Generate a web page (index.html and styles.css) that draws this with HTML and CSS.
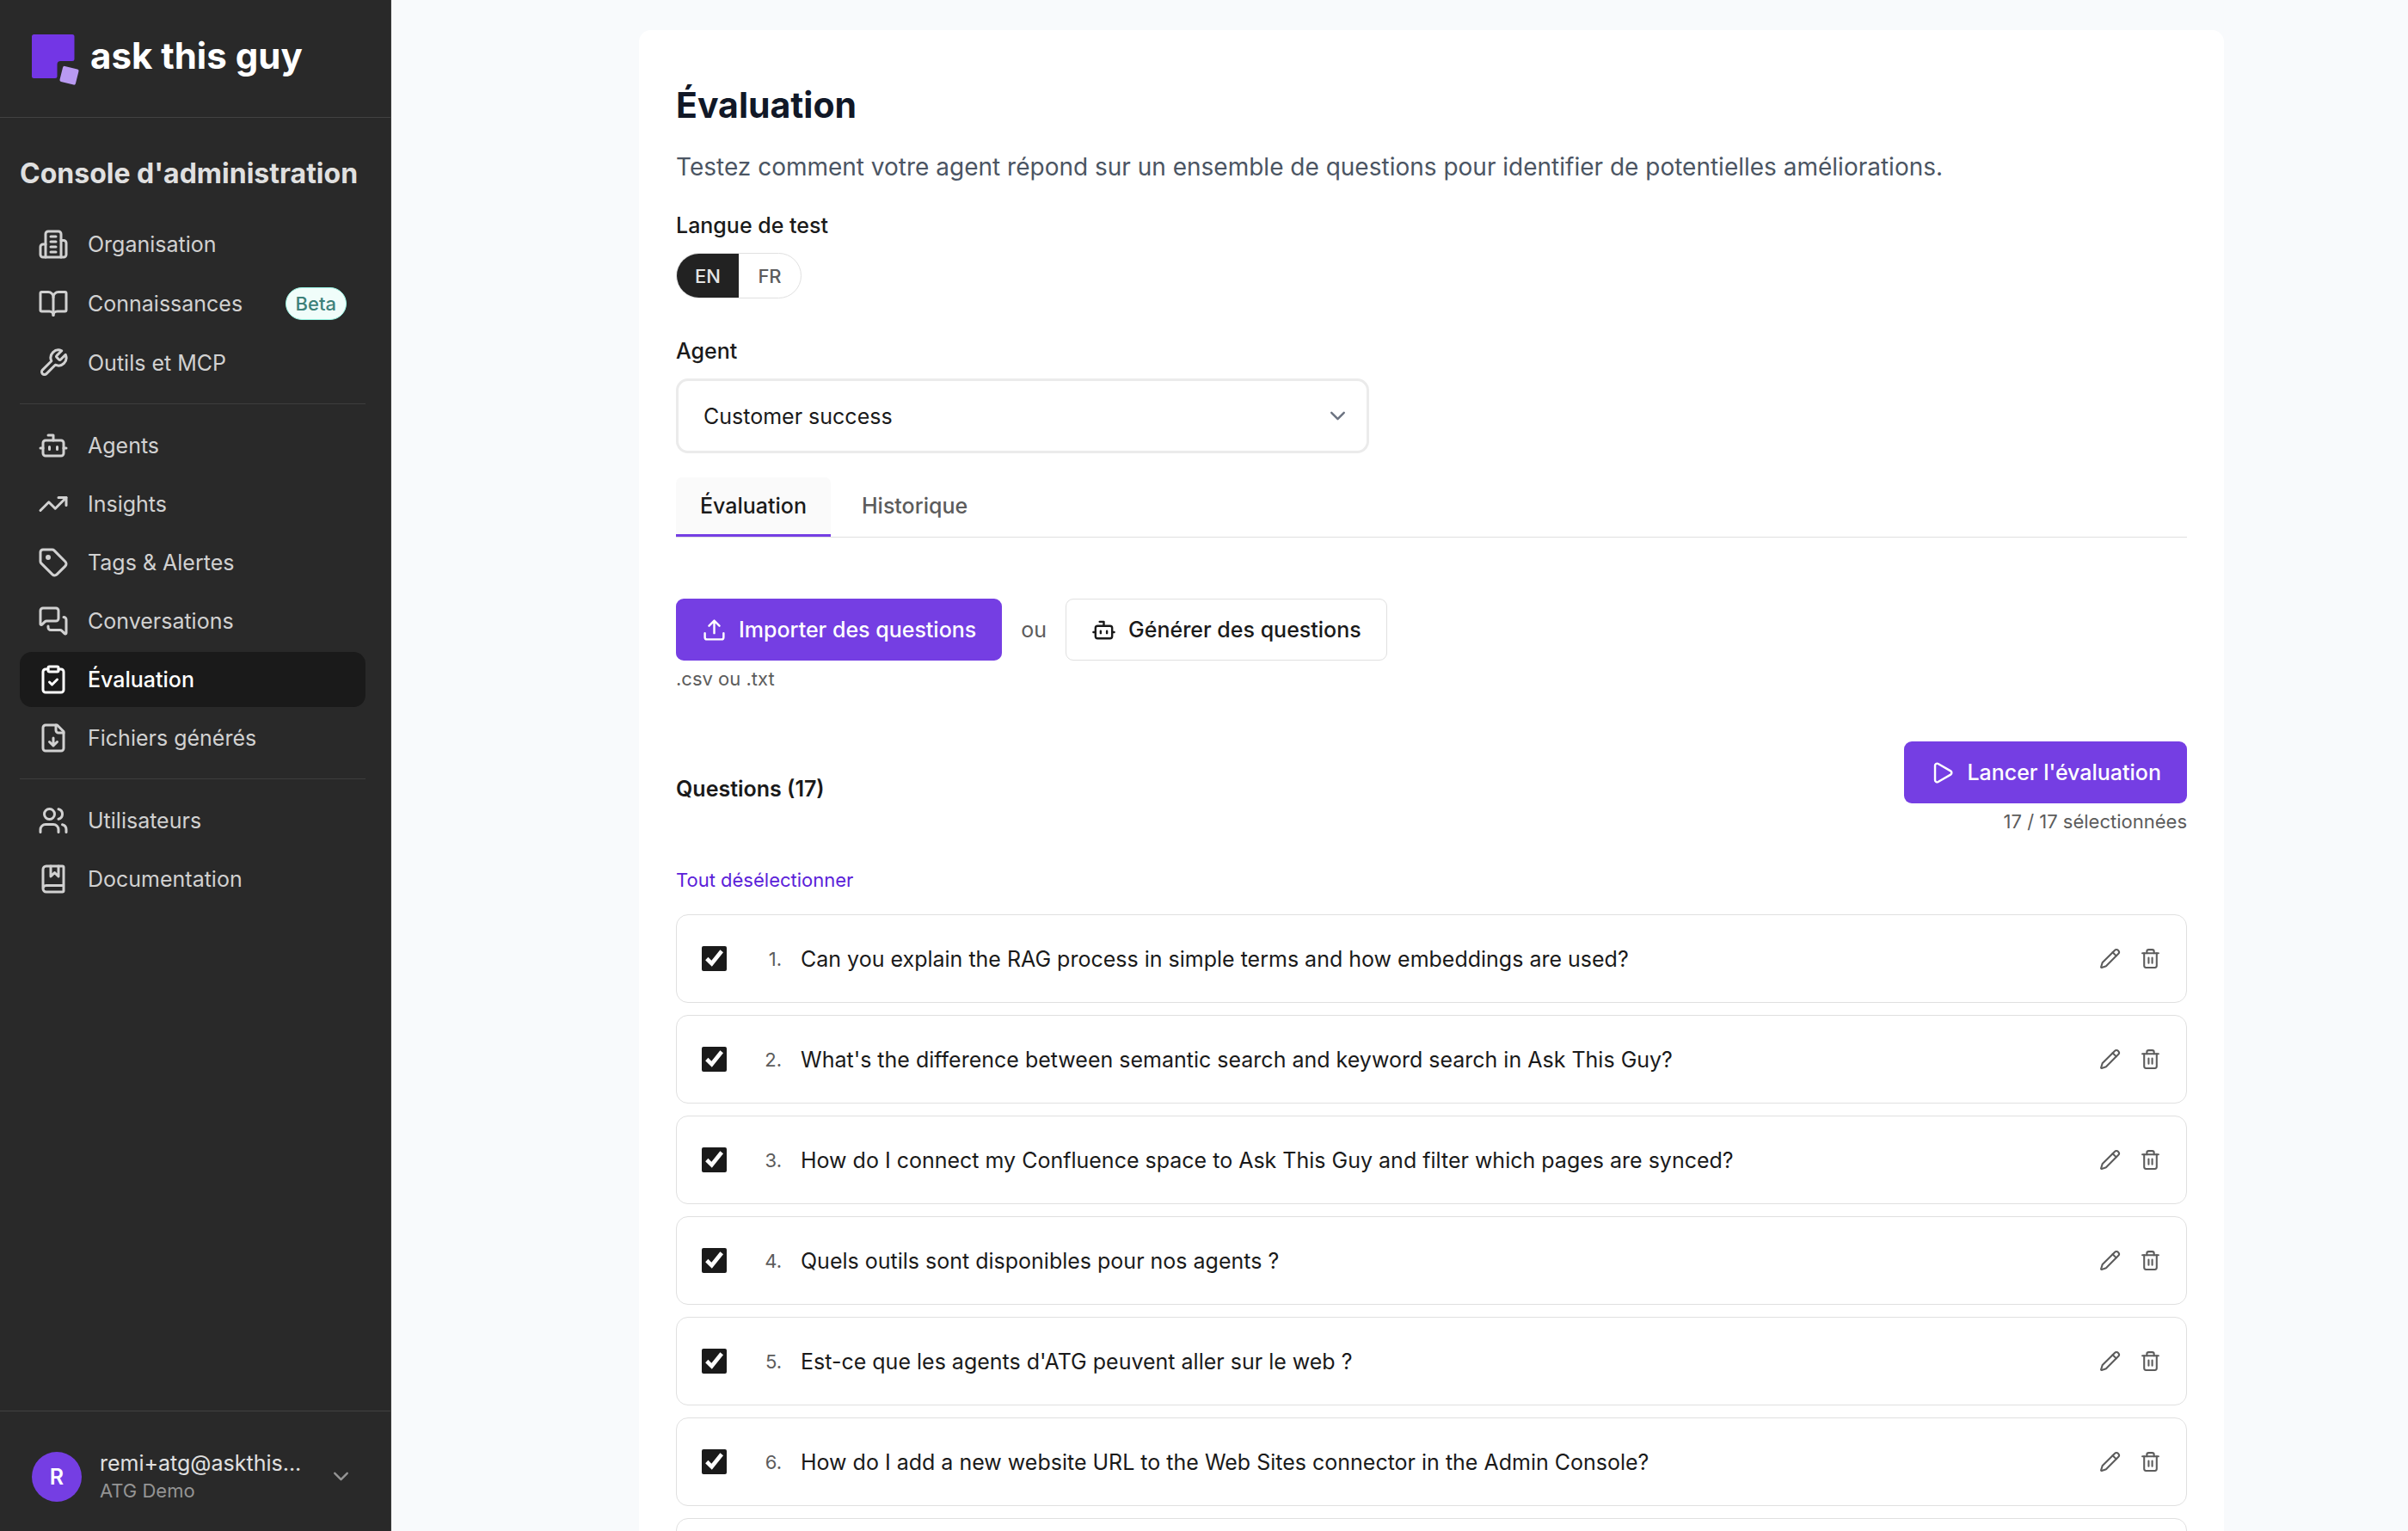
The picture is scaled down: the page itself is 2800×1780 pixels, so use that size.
FILE: index.html
```html
<!DOCTYPE html>
<html lang="fr">
    <head>
        <meta charset="UTF-8" />
        <meta name="viewport" content="width=device-width, initial-scale=1.0" />
        <title>Évaluation - ask this guy</title>
        <link rel="stylesheet" href="styles.css">
    </head>
    <body>
        <!-- Shared icons -->
        <svg class="sprite" aria-hidden="true">
            <symbol id="bot" viewBox="0 0 24 24">
                <path d="M12 8V4H8" />
                <rect width="16" height="12" x="4" y="8" rx="2" />
                <path d="M2 14h2M20 14h2M15 13v2M9 13v2" />
            </symbol>
            <symbol id="chevron" viewBox="0 0 24 24">
                <path d="m6 9 6 6 6-6" />
            </symbol>
            <symbol id="pencil" viewBox="0 0 24 24">
                <path d="M21.174 6.812a1 1 0 0 0-3.986-3.987L3.842 16.174a2 2 0 0 0-.5.83l-1.321 4.352a.5.5 0 0 0 .623.622l4.353-1.32a2 2 0 0 0 .83-.497z" />
                <path d="m15 5 4 4" />
            </symbol>
            <symbol id="trash" viewBox="0 0 24 24">
                <path d="M3 6h18" />
                <path d="M19 6v14c0 1-1 2-2 2H7c-1 0-2-1-2-2V6" />
                <path d="M8 6V4c0-1 1-2 2-2h4c1 0 2 1 2 2v2" />
                <path d="M10 11v6M14 11v6" />
            </symbol>
        </svg>

        <aside class="sidebar">
            <a class="brand" href="#">
                <svg class="brand-logo" viewBox="0 0 56 60">
                    <path fill="#7336e5" d="M2.5 0H47a2.5 2.5 0 0 1 2.5 2.5V28.500a2.5 2.5 0 0 1-2.5 2.5H33.500a4 4 0 0 0-4 4V48.500a2.5 2.5 0 0 1-2.5 2.5H2.5A2.5 2.5 0 0 1 0 48.500V2.5A2.5 2.5 0 0 1 2.5 0Z" />
                    <rect x="34" y="38.5" width="19" height="18.5" rx="2" fill="#b99af2" transform="rotate(14 43.5 47.7)" />
                </svg>
                <span>ask this guy</span>
            </a>

            <nav class="nav">
                <h2>Console d'administration</h2>
                <ul>
                    <li>
                        <a href="#">
                            <svg class="icon" viewBox="0 0 24 24">
                                <path d="M6 22V4a2 2 0 0 1 2-2h8a2 2 0 0 1 2 2v18Z" />
                                <path d="M6 12H4a2 2 0 0 0-2 2v6a2 2 0 0 0 2 2h2M18 9h2a2 2 0 0 1 2 2v9a2 2 0 0 1-2 2h-2" />
                                <path d="M10 6h4M10 10h4M10 14h4M10 18h4" />
                            </svg>
                            Organisation
                        </a>
                    </li>
                    <li>
                        <a href="#">
                            <svg class="icon" viewBox="0 0 24 24">
                                <path d="M12 7v14" />
                                <path d="M3 18a1 1 0 0 1-1-1V4a1 1 0 0 1 1-1h5a4 4 0 0 1 4 4 4 4 0 0 1 4-4h5a1 1 0 0 1 1 1v13a1 1 0 0 1-1 1h-6a3 3 0 0 0-3 3 3 3 0 0 0-3-3z" />
                            </svg>
                            Connaissances
                            <span class="badge">Beta</span>
                        </a>
                    </li>
                    <li>
                        <a href="#">
                            <svg class="icon" viewBox="0 0 24 24">
                                <path d="M14.7 6.3a1 1 0 0 0 0 1.4l1.6 1.6a1 1 0 0 0 1.4 0l3.77-3.77a6 6 0 0 1-7.94 7.94l-6.91 6.91a2.12 2.12 0 0 1-3-3l6.91-6.91a6 6 0 0 1 7.94-7.94l-3.76 3.76z" />
                            </svg>
                            Outils et MCP
                        </a>
                    </li>
                </ul>
                <ul>
                    <li>
                        <a href="#">
                            <svg class="icon"><use href="#bot" /></svg>
                            Agents
                        </a>
                    </li>
                    <li>
                        <a href="#">
                            <svg class="icon" viewBox="0 0 24 24">
                                <path d="M16 7h6v6" />
                                <path d="m22 7-8.5 8.5-5-5L2 17" />
                            </svg>
                            Insights
                        </a>
                    </li>
                    <li>
                        <a href="#">
                            <svg class="icon" viewBox="0 0 24 24">
                                <path d="M12.586 2.586A2 2 0 0 0 11.172 2H4a2 2 0 0 0-2 2v7.172a2 2 0 0 0 .586 1.414l8.704 8.704a2.426 2.426 0 0 0 3.42 0l6.58-6.58a2.426 2.426 0 0 0 0-3.42z" />
                                <circle cx="8" cy="8" r="1" />
                            </svg>
                            Tags &amp; Alertes
                        </a>
                    </li>
                    <li>
                        <a href="#">
                            <svg class="icon" viewBox="0 0 24 24">
                                <path d="M16 10a2 2 0 0 1-2 2H6.828a2 2 0 0 0-1.414.586l-2.202 2.202A.71.71 0 0 1 2 14.286V4a2 2 0 0 1 2-2h10a2 2 0 0 1 2 2z" />
                                <path d="M20 9a2 2 0 0 1 2 2v10.286a.71.71 0 0 1-1.212.502l-2.202-2.202A2 2 0 0 0 17.172 19H10a2 2 0 0 1-2-2v-1" />
                            </svg>
                            Conversations
                        </a>
                    </li>
                    <li>
                        <a class="active" href="#" aria-current="page">
                            <svg class="icon" viewBox="0 0 24 24">
                                <rect width="8" height="4" x="8" y="2" rx="1" />
                                <path d="M16 4h2a2 2 0 0 1 2 2v14a2 2 0 0 1-2 2H6a2 2 0 0 1-2-2V6a2 2 0 0 1 2-2h2" />
                                <path d="m9 14 2 2 4-4" />
                            </svg>
                            Évaluation
                        </a>
                    </li>
                    <li>
                        <a href="#">
                            <svg class="icon" viewBox="0 0 24 24">
                                <path d="M15 2H6a2 2 0 0 0-2 2v16a2 2 0 0 0 2 2h12a2 2 0 0 0 2-2V7Z" />
                                <path d="M14 2v4a2 2 0 0 0 2 2h4" />
                                <path d="M12 18v-6M9 15l3 3 3-3" />
                            </svg>
                            Fichiers générés
                        </a>
                    </li>
                </ul>
                <ul>
                    <li>
                        <a href="#">
                            <svg class="icon" viewBox="0 0 24 24">
                                <path d="M16 21v-2a4 4 0 0 0-4-4H6a4 4 0 0 0-4 4v2" />
                                <circle cx="9" cy="7" r="4" />
                                <path d="M22 21v-2a4 4 0 0 0-3-3.87M16 3.13a4 4 0 0 1 0 7.75" />
                            </svg>
                            Utilisateurs
                        </a>
                    </li>
                    <li>
                        <a href="#">
                            <svg class="icon" viewBox="0 0 24 24">
                                <path d="M10 2v8l3-3 3 3V2" />
                                <path d="M4 19.5v-15A2.5 2.5 0 0 1 6.5 2H19a1 1 0 0 1 1 1v18a1 1 0 0 1-1 1H6.5a1 1 0 0 1 0-5H20" />
                            </svg>
                            Documentation
                        </a>
                    </li>
                </ul>
            </nav>

            <button class="account" type="button">
                <span class="avatar">R</span>
                <span class="account-text">
                    <span class="account-email">remi+atg@askthis...</span>
                    <span class="account-org">ATG Demo</span>
                </span>
                <svg class="icon chevron"><use href="#chevron" /></svg>
            </button>
        </aside>

        <main class="main">
            <div class="card">
                <h1>Évaluation</h1>
                <p class="subtitle">Testez comment votre agent répond sur un ensemble de questions pour identifier de potentielles améliorations.</p>

                <div class="label" id="lang-label">Langue de test</div>
                <div class="lang-switch" role="group" aria-labelledby="lang-label">
                    <button class="selected" type="button" aria-pressed="true">EN</button>
                    <button type="button" aria-pressed="false">FR</button>
                </div>

                <label class="label" for="agent">Agent</label>
                <div class="select-wrap">
                    <select id="agent">
                        <option>Customer success</option>
                    </select>
                    <svg class="icon select-arrow"><use href="#chevron" /></svg>
                </div>

                <div class="tabs" role="tablist">
                    <button class="tab selected" type="button" role="tab" aria-selected="true">Évaluation</button>
                    <button class="tab" type="button" role="tab" aria-selected="false">Historique</button>
                </div>

                <div class="import-row">
                    <button class="btn btn-primary" type="button">
                        <svg class="icon" viewBox="0 0 24 24">
                            <path d="M12 3v12M17 8l-5-5-5 5" />
                            <path d="M21 15v4a2 2 0 0 1-2 2H5a2 2 0 0 1-2-2v-4" />
                        </svg>
                        Importer des questions
                    </button>
                    <span>ou</span>
                    <button class="btn btn-outline" type="button">
                        <svg class="icon"><use href="#bot" /></svg>
                        Générer des questions
                    </button>
                </div>
                <p class="hint">.csv ou .txt</p>

                <div class="questions-header">
                    <h3>Questions (17)</h3>
                    <div class="run">
                        <button class="btn btn-primary" type="button">
                            <svg class="icon" viewBox="0 0 24 24">
                                <path d="M5 5a2 2 0 0 1 3.008-1.728l11.997 6.998a2 2 0 0 1 .003 3.458l-12 7A2 2 0 0 1 5 19z" />
                            </svg>
                            Lancer l'évaluation
                        </button>
                        <p class="hint">17 / 17 sélectionnées</p>
                    </div>
                </div>

                <button class="link-btn" type="button">Tout désélectionner</button>

                <ul class="questions">
                    <li class="question">
                        <input type="checkbox" id="q1" checked />
                        <span class="number">1.</span>
                        <label for="q1">Can you explain the RAG process in simple terms and how embeddings are used?</label>
                        <button type="button" aria-label="Modifier"><svg class="icon"><use href="#pencil" /></svg></button>
                        <button type="button" aria-label="Supprimer"><svg class="icon"><use href="#trash" /></svg></button>
                    </li>
                    <li class="question">
                        <input type="checkbox" id="q2" checked />
                        <span class="number">2.</span>
                        <label for="q2">What's the difference between semantic search and keyword search in Ask This Guy?</label>
                        <button type="button" aria-label="Modifier"><svg class="icon"><use href="#pencil" /></svg></button>
                        <button type="button" aria-label="Supprimer"><svg class="icon"><use href="#trash" /></svg></button>
                    </li>
                    <li class="question">
                        <input type="checkbox" id="q3" checked />
                        <span class="number">3.</span>
                        <label for="q3">How do I connect my Confluence space to Ask This Guy and filter which pages are synced?</label>
                        <button type="button" aria-label="Modifier"><svg class="icon"><use href="#pencil" /></svg></button>
                        <button type="button" aria-label="Supprimer"><svg class="icon"><use href="#trash" /></svg></button>
                    </li>
                    <li class="question">
                        <input type="checkbox" id="q4" checked />
                        <span class="number">4.</span>
                        <label for="q4">Quels outils sont disponibles pour nos agents ?</label>
                        <button type="button" aria-label="Modifier"><svg class="icon"><use href="#pencil" /></svg></button>
                        <button type="button" aria-label="Supprimer"><svg class="icon"><use href="#trash" /></svg></button>
                    </li>
                    <li class="question">
                        <input type="checkbox" id="q5" checked />
                        <span class="number">5.</span>
                        <label for="q5">Est-ce que les agents d'ATG peuvent aller sur le web ?</label>
                        <button type="button" aria-label="Modifier"><svg class="icon"><use href="#pencil" /></svg></button>
                        <button type="button" aria-label="Supprimer"><svg class="icon"><use href="#trash" /></svg></button>
                    </li>
                    <li class="question">
                        <input type="checkbox" id="q6" checked />
                        <span class="number">6.</span>
                        <label for="q6">How do I add a new website URL to the Web Sites connector in the Admin Console?</label>
                        <button type="button" aria-label="Modifier"><svg class="icon"><use href="#pencil" /></svg></button>
                        <button type="button" aria-label="Supprimer"><svg class="icon"><use href="#trash" /></svg></button>
                    </li>
                    <li class="question"></li>
                </ul>
            </div>
        </main>
    </body>
</html>
```

FILE: styles.css
```css
* {
    margin: 0;
    padding: 0;
    box-sizing: border-box;
}

body {
    display: flex;
    height: 100vh;
    overflow: hidden;
    font-family: Inter, "Liberation Sans", sans-serif;
    font-size: 25px;
    line-height: 36px;
    background: #f8fafc;
    color: #1a1a1a;
}

button,
select {
    font: inherit;
    color: inherit;
    background: none;
    border: none;
    cursor: pointer;
}

ul {
    list-style: none;
}

a {
    color: inherit;
    text-decoration: none;
}

.sprite {
    display: none;
}

.icon {
    flex: none;
    width: 36px;
    height: 36px;
    fill: none;
    stroke: currentColor;
    stroke-width: 2;
    stroke-linecap: round;
    stroke-linejoin: round;
}

/* Sidebar */

.sidebar {
    display: flex;
    flex-direction: column;
    flex: none;
    width: 455px;
    background: #292929;
    border-right: 1px solid #3d3d3d;
    color: #d1d1d1;
}

.brand {
    display: flex;
    gap: 12px;
    height: 137px;
    padding: 40px 37px;
    border-bottom: 1px solid #424242;
    color: #fff;
    font-size: 42px;
    font-weight: 700;
    line-height: 50px;
}

.brand-logo {
    width: 56px;
    height: 60px;
}

.nav {
    flex: 1;
    padding: 42px 29px 0 23px;
}

.nav h2 {
    margin-bottom: 28px;
    color: #e0e0e0;
    font-size: 32px;
    font-weight: 700;
    line-height: 45px;
}

.nav ul {
    display: grid;
    gap: 4px;
}

.nav ul + ul {
    margin-top: 15px;
    padding-top: 16px;
    border-top: 1px solid #3d3d3d;
}

.nav a {
    display: flex;
    align-items: center;
    gap: 22px;
    padding: 14px 22px 14px 21px;
    border-radius: 14px;
}

.nav a.active {
    background: #1a1a1a;
    color: #fff;
    font-weight: 500;
}

.badge {
    margin-left: auto;
    padding: 0 11px;
    border: 1px solid #99f6e4;
    border-radius: 20px;
    background: #f0fdfa;
    color: #3d8179;
    font-size: 22px;
    font-weight: 500;
}

.account {
    display: flex;
    align-items: center;
    gap: 21px;
    height: 140px;
    padding: 12px 43px 0 37px;
    border-top: 1px solid #424242;
    text-align: left;
}

.avatar {
    flex: none;
    width: 58px;
    height: 58px;
    border-radius: 50%;
    background: #753ee3;
    color: #fff;
    font-weight: 600;
    line-height: 58px;
    text-align: center;
}

.account-text {
    flex: 1;
    min-width: 0;
    line-height: 32px;
    white-space: nowrap;
}

.account-email,
.account-org {
    display: block;
}

.account-email {
    color: #e0e0e0;
}

.account-org {
    color: #949494;
    font-size: 22px;
}

.chevron {
    width: 29px;
    height: 29px;
    color: #949494;
}

/* Main */

.main {
    flex: 1;
    min-width: 0;
    padding: 35px 36px 0 110px;
}

.card {
    max-width: 1843px;
    min-height: 100%;
    margin: 0 auto;
    padding: 58px 43px;
    border-radius: 14px;
    background: #fff;
}

h1 {
    margin-bottom: 23px;
    color: #111827;
    font-size: 41px;
    font-weight: 700;
    line-height: 58px;
}

.subtitle {
    margin-bottom: 30px;
    color: #4b5563;
    font-size: 28px;
    line-height: 40px;
}

.label {
    display: block;
    margin-bottom: 14px;
    font-weight: 500;
}

.lang-switch {
    display: inline-flex;
    height: 53px;
    margin-bottom: 43px;
    border: 1px solid #e0e0e0;
    border-radius: 27px;
    overflow: hidden;
}

.lang-switch button {
    width: 72px;
    color: #5c5c5c;
    font-size: 22px;
    font-weight: 500;
}

.lang-switch .selected {
    background: #222;
    color: #e5e5e5;
}

.select-wrap {
    position: relative;
    max-width: 806px;
    margin-bottom: 28px;
}

.select-wrap select {
    display: block;
    width: 100%;
    height: 87px;
    padding: 0 29px;
    border: 3px solid #ebebeb;
    border-radius: 14px;
    appearance: none;
}

.select-arrow {
    position: absolute;
    top: 29px;
    right: 22px;
    width: 29px;
    height: 29px;
    color: #6b7280;
    pointer-events: none;
}

.tabs {
    display: flex;
    gap: 8px;
    margin-bottom: 71px;
    border-bottom: 1px solid #e0e0e0;
}

.tab {
    height: 69px;
    padding: 0 28px;
    border-bottom: 3px solid transparent;
    border-radius: 7px 7px 0 0;
    color: #5c5c5c;
    font-weight: 500;
}

.tab.selected {
    border-bottom-color: #753ee3;
    background: #fafafa;
    color: #1a1a1a;
}

.import-row {
    display: flex;
    align-items: center;
    gap: 22px;
    color: #5c5c5c;
}

.btn {
    display: flex;
    align-items: center;
    gap: 14px;
    height: 72px;
    padding: 0 29px;
    border: 1px solid transparent;
    border-radius: 9px;
    font-weight: 500;
}

.btn .icon {
    width: 29px;
    height: 29px;
}

.btn-primary {
    background: #753ee3;
    color: #fff;
}

.btn-outline {
    border-color: #e0e0e0;
    color: #1a1a1a;
}

.hint {
    margin-top: 5px;
    color: #5c5c5c;
    font-size: 22px;
    line-height: 32px;
}

.questions-header {
    display: flex;
    align-items: center;
    justify-content: space-between;
    margin: 57px 0 34px;
}

.questions-header h3 {
    font-size: 25px;
    font-weight: 600;
}

.run {
    display: flex;
    flex-direction: column;
    align-items: flex-end;
}

.link-btn {
    display: block;
    margin-bottom: 22px;
    color: #5b21d9;
    font-size: 22px;
}

.questions {
    display: grid;
    gap: 14px;
}

.question {
    display: flex;
    align-items: center;
    height: 103px;
    padding: 0 29px;
    border: 1px solid #e0e0e0;
    border-radius: 14px;
}

.question input {
    width: 29px;
    height: 29px;
    accent-color: #1a1a1a;
}

.question .number {
    width: 64px;
    color: #5c5c5c;
    font-size: 22px;
    text-align: right;
}

.question label {
    flex: 1;
    margin-left: 22px;
}

.question button {
    display: flex;
    margin-left: 22px;
    color: #5c5c5c;
}

.question .icon {
    width: 25px;
    height: 25px;
}
```
